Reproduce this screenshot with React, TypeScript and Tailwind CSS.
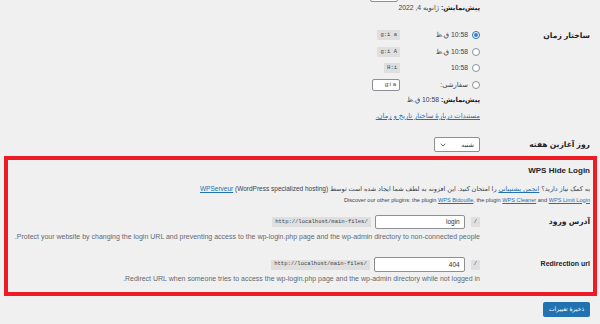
const Radio = ({ checked }: { checked?: boolean }) => (
  <span
    className={`flex h-[8px] w-[8px] shrink-0 items-center justify-center rounded-full border bg-white ${
      checked ? 'border-[#2271b1]' : 'border-[#8c8f94]'
    }`}
  >
    {checked && <span className="h-[4px] w-[4px] rounded-full bg-[#3582c4]" />}
  </span>
);

const Code = ({ children }: { children: React.ReactNode }) => (
  <code
    dir="ltr"
    className="flex h-[10px] items-center bg-[#dfdfe0] px-[3px] font-['Liberation_Mono',monospace] text-[5.5px] text-[#3c434a]"
  >
    {children}
  </code>
);

const TimeOption = ({ checked, text, code }: { checked?: boolean; text: string; code: string }) => (
  <div className="flex h-[16.5px] items-center">
    <Radio checked={checked} />
    <span className="mr-[4px] w-[68px] shrink-0 text-[6.8px]">{text}</span>
    <Code>{code}</Code>
  </div>
);

export default function App() {
  return (
    <div
      dir="rtl"
      className="h-[324px] w-[600px] overflow-hidden bg-[#f0f0f1] font-['Liberation_Sans','DejaVu_Sans',sans-serif] text-[#3c434a]"
    >
      <div className="pr-[10px]">
        {/* end of the date format row */}
        <div className="flex">
          <div className="w-[110px] shrink-0" />
          <div className="flex-1">
            <div className="-mt-[14px] mr-[82px] h-[16px] w-[28px] rounded-[2px] border border-[#8c8f94] bg-white" />
            <div className="flex h-[13px] items-center text-[6.8px]">
              <strong className="font-bold text-[#1d2327]">پیش‌نمایش:</strong>&nbsp;ژانویه 4, 2022
            </div>
          </div>
        </div>

        {/* time format */}
        <div className="mt-[12px] flex">
          <div className="flex h-[16.5px] w-[110px] shrink-0 items-center text-[7.6px] font-bold text-[#1d2327]">
            ساختار زمان
          </div>
          <div className="flex-1">
            <TimeOption checked text="10:58 ق.ظ" code="g:i a" />
            <TimeOption text="10:58 ق.ظ" code="g:i A" />
            <TimeOption text="10:58" code="H:i" />
            <div className="flex h-[16.5px] items-center">
              <Radio />
              <span className="mr-[4px] w-[68px] shrink-0 text-[6.8px]">سفارشی:</span>
              <div className="flex h-[12px] w-[28px] items-center rounded-[2px] border border-[#8c8f94] bg-white pr-[3px] text-[6px]">
                g:i a
              </div>
            </div>
            <div className="flex h-[15px] items-center text-[6.8px]">
              <strong className="font-bold text-[#1d2327]">پیش‌نمایش:</strong>&nbsp;10:58 ق.ظ
            </div>
            <div className="flex h-[16px] items-center text-[6.8px]">
              <a className="text-[#2271b1] underline">مستندات درباره‌ٔ ساختار تاریخ و زمان.</a>
            </div>
          </div>
        </div>

        {/* week start */}
        <div className="mt-[13px] flex items-center">
          <div className="w-[110px] shrink-0 text-[7.6px] font-bold text-[#1d2327]">روز آغازین هفته</div>
          <div className="flex h-[15px] w-[46px] items-center justify-between rounded-[2px] border border-[#8c8f94] bg-white px-[5px] text-[6.5px] text-[#2c3338]">
            <span>شنبه</span>
            <svg width="6" height="4" viewBox="0 0 6 4" fill="none" stroke="#50575e" strokeWidth="0.9">
              <path d="M0.7 0.8 L3 3 L5.3 0.8" />
            </svg>
          </div>
        </div>
      </div>

      {/* WPS Hide Login section */}
      <div className="ml-[4px] mr-[3px] mt-[4px] border-4 border-[#ed1c24] pb-[7px] pr-[3px]">
        <h2 className="mt-[5px] flex h-[12px] items-center text-[8px] font-bold text-[#1d2327]">WPS Hide Login</h2>
        <p className="mt-[7px] flex h-[10.5px] items-center whitespace-nowrap text-[6.5px]">
          <span>
            به کمک نیاز دارید؟ <a className="text-[#2271b1] underline">انجمن پشتیبانی</a> را امتحان کنید. این افزونه به
            لطف شما ایجاد شده است توسط <a className="text-[#2271b1] underline">WPServeur</a> (WordPress specialized
            hosting)
          </span>
        </p>
        <p className="flex h-[10.5px] items-center whitespace-nowrap text-[5.6px]">
          <span>
            Discover our other plugins: the plugin <a className="text-[#2271b1] underline">WPS Bidouille</a>, the
            plugin <a className="text-[#2271b1] underline">WPS Cleaner</a> and{' '}
            <a className="text-[#2271b1] underline">WPS Limit Login</a>
          </span>
        </p>

        <div className="mt-[10px] flex">
          <div className="flex h-[14px] w-[110px] shrink-0 items-center text-[7.6px] font-bold text-[#1d2327]">
            آدرس ورود
          </div>
          <div className="flex-1">
            <div className="flex h-[14px] items-center">
              <Code>/</Code>
              <div className="mr-[6px] flex h-[14px] w-[90px] items-center rounded-[2px] border border-[#8c8f94] bg-white pr-[4px] text-[6.5px] text-[#2c3338]">
                login
              </div>
              <span className="mr-[4px]">
                <Code>http://localhost/main-files/</Code>
              </span>
            </div>
            <p className="mt-[2px] flex h-[12px] items-center whitespace-nowrap text-[7px] text-[#646970]">
              Protect your website by changing the login URL and preventing access to the wp-login.php page and the
              wp-admin directory to non-connected people.
            </p>
          </div>
        </div>

        <div className="mt-[14px] flex">
          <div className="flex h-[15px] w-[110px] shrink-0 items-center text-[7px] font-bold text-[#1d2327]">
            Redirection url
          </div>
          <div className="flex-1">
            <div className="flex h-[15px] items-center">
              <Code>/</Code>
              <div className="mr-[6px] flex h-[15px] w-[91px] items-center rounded-[2px] border border-[#8c8f94] bg-white pr-[4px] text-[6.5px] text-[#2c3338]">
                404
              </div>
              <span className="mr-[4px]">
                <Code>http://localhost/main-files/</Code>
              </span>
            </div>
            <p className="mt-[1px] flex h-[12px] items-center whitespace-nowrap text-[7px] text-[#646970]">
              Redirect URL when someone tries to access the wp-login.php page and the wp-admin directory while not
              logged in.
            </p>
          </div>
        </div>
      </div>

      <div className="mt-[6px] flex pr-[10px]">
        <button className="flex h-[15px] w-[47px] items-center justify-center rounded-[2px] bg-[#2271b1] text-[6px] text-white">
          ذخیرهٔ تغییرات
        </button>
      </div>
    </div>
  );
}
